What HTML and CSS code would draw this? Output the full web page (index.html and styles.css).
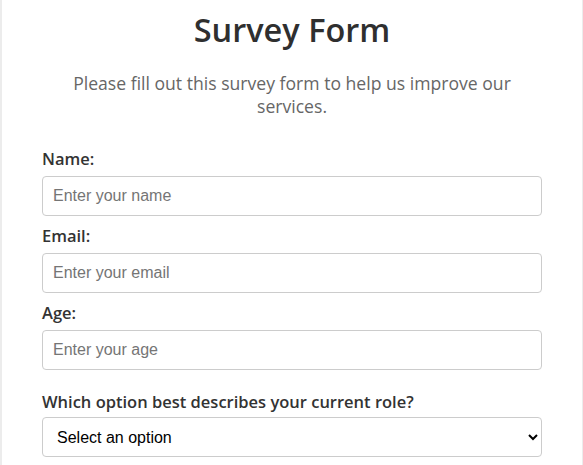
FILE: index.html
```html
<!DOCTYPE html>
<html lang="en">
<head>
<meta charset="utf-8">
<title>Survey Form</title>
<link rel="stylesheet" href="styles.css">
</head>
<body>
<main class="container">
  <h1 class="title">Survey Form</h1>
  <p class="description">Please fill out this survey form to help us improve our services.</p>
  <form class="survey">
    <div class="field">
      <label class="label" for="name">Name:</label>
      <input class="control" id="name" type="text" placeholder="Enter your name">
    </div>
    <div class="field">
      <label class="label" for="email">Email:</label>
      <input class="control" id="email" type="email" placeholder="Enter your email">
    </div>
    <div class="field">
      <label class="label" for="age">Age:</label>
      <input class="control" id="age" type="number" placeholder="Enter your age">
    </div>
    <div class="field field-question">
      <label class="label" for="role">Which option best describes your current role?</label>
      <select class="control select" id="role">
        <option>Select an option</option>
        <option>Student</option>
        <option>Full-time job</option>
        <option>Prefer not to say</option>
      </select>
    </div>
  </form>
</main>
</body>
</html>
```

FILE: styles.css
```css
html, body {
  margin: 0;
  padding: 0;
}

body {
  background: #ececec;
  font-family: "Open Sans", "Noto Sans", "Liberation Sans", sans-serif;
  color: #333;
}

.container {
  width: 580px;
  margin-left: 2px;
  box-sizing: border-box;
  padding: 9px 40px 20px;
  background: #fff;
  min-height: 465px;
}

.title {
  margin: 0;
  font-size: 32.5px;
  line-height: 42px;
  font-weight: 600;
  text-align: center;
  color: #2f2f2f;
}

.description {
  margin: 21px 0 28px;
  font-size: 17.6px;
  line-height: 23px;
  text-align: center;
  color: #666;
}

.survey {
  display: flex;
  flex-direction: column;
  gap: 7px;
}

.field {
  display: flex;
  flex-direction: column;
  gap: 4px;
}

.field-question {
  margin-top: 12px;
  gap: 2px;
}

.label {
  font-size: 16.5px;
  line-height: 26px;
  font-weight: 600;
  color: #333;
}

.control {
  box-sizing: border-box;
  height: 40px;
  width: 100%;
  margin: 0;
  padding: 0 10px;
  border: 1px solid #ccc;
  border-radius: 4px;
  background: #fff;
  font-family: "Liberation Sans", Arial, sans-serif;
  font-size: 16px;
  color: #000;
}

.control::placeholder {
  color: #757575;
}

.select {
  padding-left: 10px;
}
```
